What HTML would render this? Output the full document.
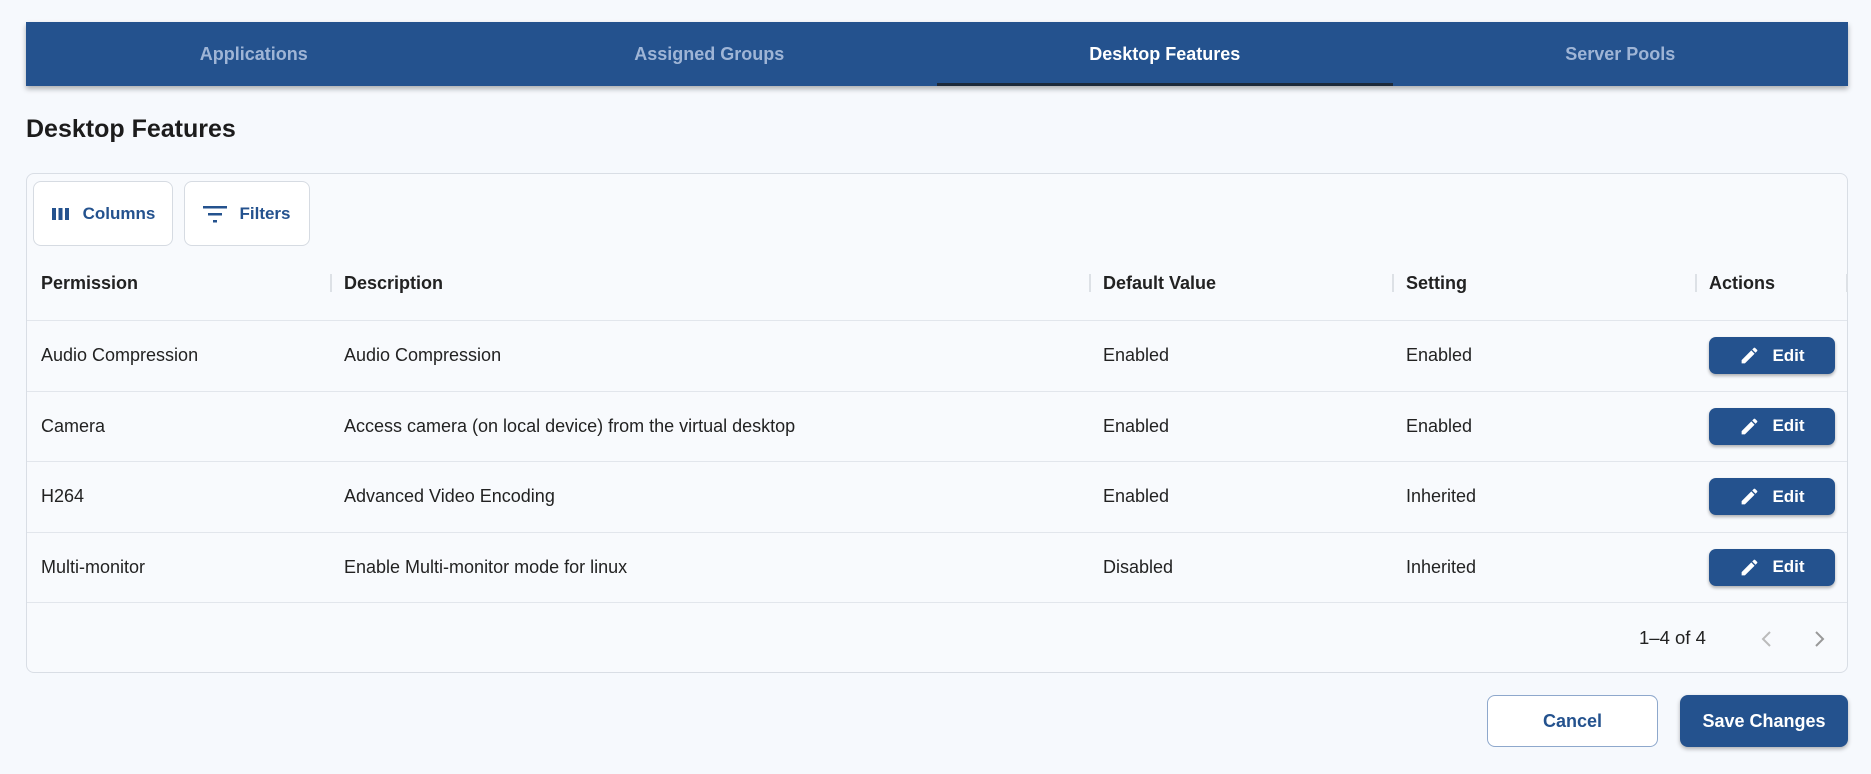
<!DOCTYPE html>
<html><head><meta charset="utf-8"><style>
*{box-sizing:border-box;margin:0;padding:0}
body{width:1871px;height:774px;background:#f6f9fd;font-family:"Liberation Sans",sans-serif;color:#222;position:relative;overflow:hidden}
.nav{position:absolute;left:26px;top:22px;width:1822px;height:64px;background:#24528e;box-shadow:0 3px 5px rgba(0,0,0,.3);display:flex}
.nav div{flex:1;text-align:center;line-height:64px;font-size:18px;font-weight:bold;color:#9fb5d6;position:relative}
.nav div.act{color:#fff}
.nav div.act:after{content:"";position:absolute;left:0;right:0;bottom:0;height:3px;background:#1d2a3a}
h1{position:absolute;left:26px;top:115px;font-size:25px;font-weight:bold;color:#1c1c1c}
.card{position:absolute;left:26px;top:173px;width:1822px;height:500px;border:1px solid #d9dee5;border-radius:8px;background:#f8fafd}
.tb{position:absolute;top:7px;height:65px;border:1px solid #d6dbe2;border-radius:8px;background:#fff;color:#24528e;font-size:17px;font-weight:bold;display:flex;align-items:center;justify-content:center;gap:12px}
.hdr,.row{position:absolute;left:0;width:1820px;font-size:18px}
.hdr{top:72px;height:75px;font-weight:bold;border-bottom:1px solid #e2e6ec}
.row{height:70.5px;border-bottom:1px solid #e2e6ec}
.c{position:absolute;top:0;height:100%;display:flex;align-items:center}
.sep{position:absolute;top:28px;width:2px;height:18px;background:#dde1e6}
.edit{position:absolute;left:1682px;top:16px;width:126px;height:37px;background:#24528e;border-radius:7px;box-shadow:0 2px 3px rgba(0,0,0,.3);color:#fff;font-weight:bold;font-size:17px;display:flex;align-items:center;justify-content:center;gap:12px}
.btn{position:absolute;top:695px;height:52px;border-radius:8px;font-size:18px;font-weight:bold;display:flex;align-items:center;justify-content:center}
</style></head><body>
<div class="nav"><div>Applications</div><div>Assigned Groups</div><div class="act">Desktop Features</div><div>Server Pools</div></div>
<h1>Desktop Features</h1>
<div class="card">
<div class="tb" style="left:6px;width:140px"><svg width="20" height="16" viewBox="0 0 20 16"><rect x="1" y="2" width="4" height="12" fill="#24528e"/><rect x="7.5" y="2" width="4" height="12" fill="#24528e"/><rect x="14" y="2" width="4" height="12" fill="#24528e"/></svg>Columns</div>
<div class="tb" style="left:157px;width:126px"><svg width="24" height="18" viewBox="0 0 24 18"><rect x="0" y="1" width="24" height="2.5" fill="#24528e"/><rect x="5" y="8" width="14" height="2.5" fill="#24528e"/><rect x="10" y="15" width="4" height="2.5" fill="#24528e"/></svg>Filters</div>
<div class="hdr">
<div class="c" style="left:14px">Permission</div><div class="sep" style="left:303px"></div>
<div class="c" style="left:317px">Description</div><div class="sep" style="left:1062px"></div>
<div class="c" style="left:1076px">Default Value</div><div class="sep" style="left:1365px"></div>
<div class="c" style="left:1379px">Setting</div><div class="sep" style="left:1668px"></div>
<div class="c" style="left:1682px">Actions</div><div class="sep" style="left:1819px"></div>
</div>
<div class="row" style="top:147px"><div class="c" style="left:14px">Audio Compression</div><div class="c" style="left:317px">Audio Compression</div><div class="c" style="left:1076px">Enabled</div><div class="c" style="left:1379px">Enabled</div><div class="edit"><svg width="21" height="21" viewBox="0 0 24 24"><path d="M3 17.25V21h3.75L17.81 9.94l-3.75-3.75zM20.71 7.04a1 1 0 0 0 0-1.41l-2.34-2.34a1 1 0 0 0-1.41 0l-1.83 1.83 3.75 3.75z" fill="#fff"/></svg>Edit</div></div>
<div class="row" style="top:217.5px"><div class="c" style="left:14px">Camera</div><div class="c" style="left:317px">Access camera (on local device) from the virtual desktop</div><div class="c" style="left:1076px">Enabled</div><div class="c" style="left:1379px">Enabled</div><div class="edit"><svg width="21" height="21" viewBox="0 0 24 24"><path d="M3 17.25V21h3.75L17.81 9.94l-3.75-3.75zM20.71 7.04a1 1 0 0 0 0-1.41l-2.34-2.34a1 1 0 0 0-1.41 0l-1.83 1.83 3.75 3.75z" fill="#fff"/></svg>Edit</div></div>
<div class="row" style="top:288px"><div class="c" style="left:14px">H264</div><div class="c" style="left:317px">Advanced Video Encoding</div><div class="c" style="left:1076px">Enabled</div><div class="c" style="left:1379px">Inherited</div><div class="edit"><svg width="21" height="21" viewBox="0 0 24 24"><path d="M3 17.25V21h3.75L17.81 9.94l-3.75-3.75zM20.71 7.04a1 1 0 0 0 0-1.41l-2.34-2.34a1 1 0 0 0-1.41 0l-1.83 1.83 3.75 3.75z" fill="#fff"/></svg>Edit</div></div>
<div class="row" style="top:358.5px"><div class="c" style="left:14px">Multi-monitor</div><div class="c" style="left:317px">Enable Multi-monitor mode for linux</div><div class="c" style="left:1076px">Disabled</div><div class="c" style="left:1379px">Inherited</div><div class="edit"><svg width="21" height="21" viewBox="0 0 24 24"><path d="M3 17.25V21h3.75L17.81 9.94l-3.75-3.75zM20.71 7.04a1 1 0 0 0 0-1.41l-2.34-2.34a1 1 0 0 0-1.41 0l-1.83 1.83 3.75 3.75z" fill="#fff"/></svg>Edit</div></div>
<div style="position:absolute;left:1612px;top:453px;font-size:18.5px">1–4 of 4</div>
<svg style="position:absolute;left:1732px;top:455px" width="16" height="20" viewBox="0 0 16 20"><path d="M11 3L4 10l7 7" stroke="#bbb" stroke-width="2" fill="none"/></svg>
<svg style="position:absolute;left:1784px;top:455px" width="16" height="20" viewBox="0 0 16 20"><path d="M5 3l7 7-7 7" stroke="#999" stroke-width="2" fill="none"/></svg>
</div>
<div class="btn" style="left:1487px;width:171px;border:1px solid #8ea8cc;background:#fff;color:#24528e">Cancel</div>
<div class="btn" style="left:1680px;width:168px;background:#24528e;color:#fff;box-shadow:0 2px 4px rgba(0,0,0,.3)">Save Changes</div>
</body></html>
